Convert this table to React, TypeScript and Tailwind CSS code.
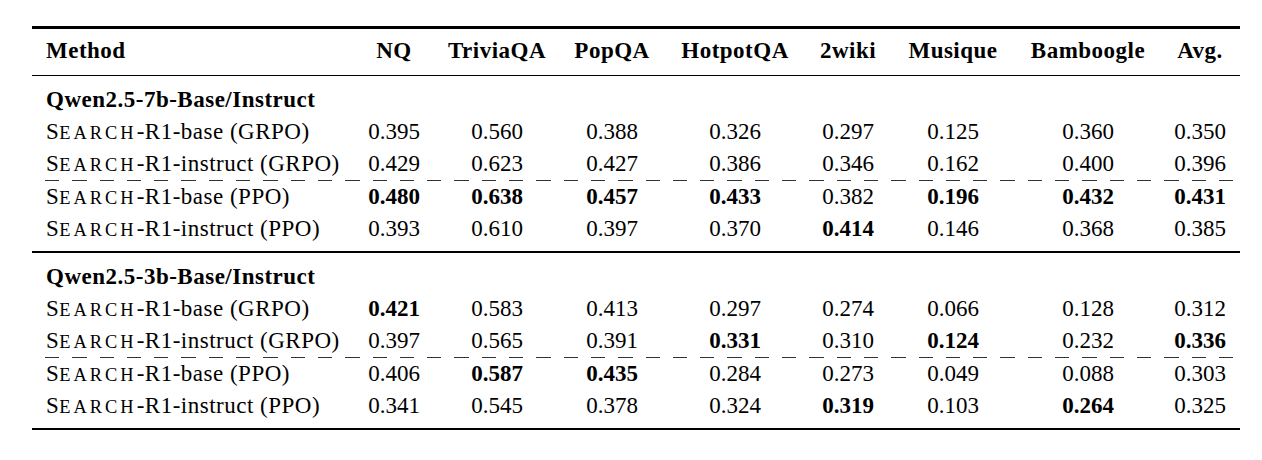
import React from "react";

// columns: Method + 8 datasets, widths picked so the centres sit where the paper's table has them
const cols = "grid grid-cols-[322px_80px_126px_104px_142px_84px_126px_144px_80px]";

const headers = ["NQ", "TriviaQA", "PopQA", "HotpotQA", "2wiki", "Musique", "Bamboogle", "Avg."];

type Row = { name: string; variant: string; vals: string[] };

// a leading "*" marks the best score in a column (set in bold)
const groups: { title: string; rows: Row[] }[] = [
  {
    title: "Qwen2.5-7b-Base/Instruct",
    rows: [
      { name: "base", variant: "GRPO", vals: ["0.395", "0.560", "0.388", "0.326", "0.297", "0.125", "0.360", "0.350"] },
      { name: "instruct", variant: "GRPO", vals: ["0.429", "0.623", "0.427", "0.386", "0.346", "0.162", "0.400", "0.396"] },
      { name: "base", variant: "PPO", vals: ["*0.480", "*0.638", "*0.457", "*0.433", "0.382", "*0.196", "*0.432", "*0.431"] },
      { name: "instruct", variant: "PPO", vals: ["0.393", "0.610", "0.397", "0.370", "*0.414", "0.146", "0.368", "0.385"] },
    ],
  },
  {
    title: "Qwen2.5-3b-Base/Instruct",
    rows: [
      { name: "base", variant: "GRPO", vals: ["*0.421", "0.583", "0.413", "0.297", "0.274", "0.066", "0.128", "0.312"] },
      { name: "instruct", variant: "GRPO", vals: ["0.397", "0.565", "0.391", "*0.331", "0.310", "*0.124", "0.232", "*0.336"] },
      { name: "base", variant: "PPO", vals: ["0.406", "*0.587", "*0.435", "0.284", "0.273", "0.049", "0.088", "0.303"] },
      { name: "instruct", variant: "PPO", vals: ["0.341", "0.545", "0.378", "0.324", "*0.319", "0.103", "*0.264", "0.325"] },
    ],
  },
];

function DashedRule() {
  return (
    <div className="h-px bg-[repeating-linear-gradient(90deg,transparent_0_13px,#333_13px_27.3px)]" />
  );
}

function DataRow({ row }: { row: Row }) {
  return (
    <div className={`${cols} h-[32px] leading-[32px]`}>
      <div className="pl-[14px] tracking-[0.5px] whitespace-nowrap">
        S<span className="text-[0.8em] tracking-[3px]">EARCH</span>-R1-{row.name} ({row.variant})
      </div>
      {row.vals.map((v, i) =>
        v.startsWith("*") ? (
          <div key={i} className="text-center font-bold">
            {v.slice(1)}
          </div>
        ) : (
          <div key={i} className="text-center">
            {v}
          </div>
        )
      )}
    </div>
  );
}

export default function App() {
  return (
    <div className="bg-white w-[1262px] h-[460px] pt-[26px] pl-[32px]">
      <div className="w-[1208px] font-['Liberation_Serif',serif] text-[23px] text-black">
        <div className="h-[2.5px] bg-black" />

        {/* Header */}
        <div className={`${cols} h-[46px] items-center font-bold tracking-[0.5px]`}>
          <div className="pl-[14px]">Method</div>
          {headers.map((h) => (
            <div key={h} className="text-center">
              {h}
            </div>
          ))}
        </div>
        <div className="h-[1.5px] bg-black" />

        {groups.map((g, gi) => (
          <React.Fragment key={g.title}>
            {gi > 0 && <div className="h-[1.5px] bg-black" />}
            <div className="pt-[8px] pb-[6px]">
              <div className="h-[32px] leading-[32px] pl-[14px] font-bold tracking-[0.5px]">{g.title}</div>
              <DataRow row={g.rows[0]} />
              <DataRow row={g.rows[1]} />
              <DashedRule />
              <DataRow row={g.rows[2]} />
              <DataRow row={g.rows[3]} />
            </div>
          </React.Fragment>
        ))}

        <div className="h-[2.5px] bg-black" />
      </div>
    </div>
  );
}
